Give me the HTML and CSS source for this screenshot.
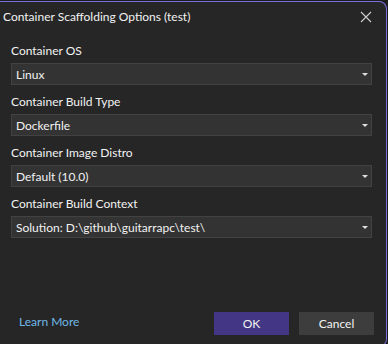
FILE: index.html
```html
<!DOCTYPE html>
<html>
<head>
<meta charset="utf-8">
<link rel="stylesheet" href="styles.css">
</head>
<body>
<div class="window">
  <div class="titlebar">
    <span class="title">Container Scaffolding Options (test)</span>
    <svg class="close" width="12" height="12" viewBox="0 0 12 12"><path d="M1 1L11 11M11 1L1 11" stroke="#cfcfcf" stroke-width="1.1" fill="none"/></svg>
  </div>
  <div class="content">
    <div class="field">
      <div class="label">Container OS</div>
      <div class="select"><span>Linux</span><i class="arrow"></i></div>
    </div>
    <div class="field">
      <div class="label">Container Build Type</div>
      <div class="select"><span>Dockerfile</span><i class="arrow"></i></div>
    </div>
    <div class="field">
      <div class="label">Container Image Distro</div>
      <div class="select"><span>Default (10.0)</span><i class="arrow"></i></div>
    </div>
    <div class="field">
      <div class="label">Container Build Context</div>
      <div class="select"><span>Solution: D:\github\guitarrapc\test\</span><i class="arrow"></i></div>
    </div>
  </div>
  <div class="footer">
    <a class="link">Learn More</a>
    <div class="buttons">
      <div class="btn primary">OK</div>
      <div class="btn">Cancel</div>
    </div>
  </div>
</div>
</body>
</html>
```
FILE: styles.css
```css
html, body {
  margin: 0;
  padding: 0;
  background: #1c1c1c;
  overflow: hidden;
}
body {
  font-family: Lato, "Noto Sans", sans-serif;
  font-size: 12px;
  color: #f2f2f2;
}
.window {
  box-sizing: border-box;
  margin-top: 1px;
  width: 387px;
  height: 346px;
  background: #262626;
  border-top: 1px solid #7b6fe0;
  border-right: 1px solid #7b6fe0;
  border-bottom: 1px solid #7b6fe0;
  border-radius: 0 8px 8px 0;
  display: flex;
  flex-direction: column;
}
.titlebar {
  height: 30px;
  display: flex;
  align-items: center;
  justify-content: space-between;
  padding: 0 14px 0 3px;
}
.title {
  font-size: 12px;
  line-height: 16px;
}
.close {
  display: block;
}
.content {
  padding: 11px 14px 0 11px;
  display: flex;
  flex-direction: column;
}
.field {
  margin-bottom: 9px;
}
.label {
  line-height: 16px;
  height: 16px;
  margin-bottom: 4px;
}
.select {
  box-sizing: border-box;
  height: 22px;
  background: #333333;
  border: 1px solid #424242;
  display: flex;
  align-items: center;
  justify-content: space-between;
  padding: 0 3px 0 4px;
}
.arrow {
  width: 0;
  height: 0;
  border-left: 3px solid transparent;
  border-right: 3px solid transparent;
  border-top: 3px solid #e0e0e0;
}
.footer {
  margin-top: 65px;
  display: flex;
  align-items: center;
  justify-content: space-between;
  padding: 0 12px 0 19px;
}
.link {
  color: #6fb9e6;
  position: relative;
  top: -2px;
}
.buttons {
  display: flex;
  gap: 10px;
}
.btn {
  width: 75px;
  height: 23px;
  line-height: 23px;
  text-align: center;
  background: #3d3d3d;
}
.btn.primary {
  background: #433785;
}
```
